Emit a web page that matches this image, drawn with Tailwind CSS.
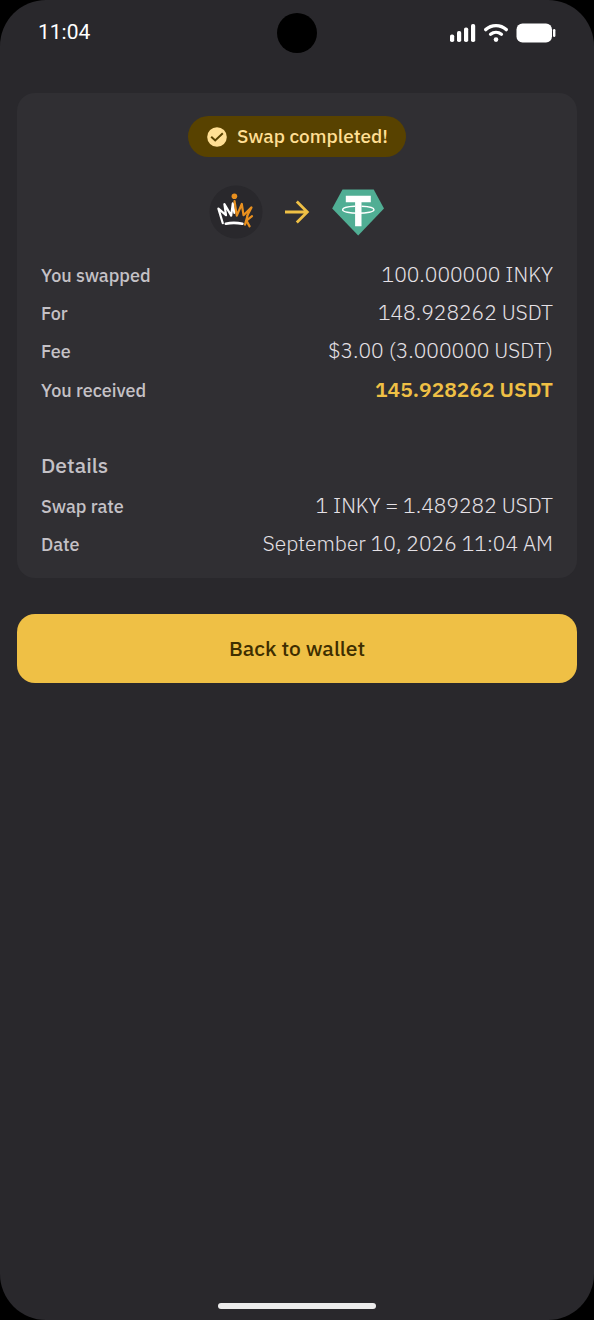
<!DOCTYPE html>
<html lang="en">
<head>
  <meta charset="UTF-8">
  <meta name="viewport" content="width=device-width, initial-scale=1.0">
  <title>Swap completed</title>
  <script src="https://cdn.jsdelivr.net/npm/@tailwindcss/browser@4"></script>
</head>
<body class="bg-black font-['IBM_Plex_Sans','Noto_Sans',sans-serif]">
  <div class="min-h-screen flex flex-col bg-[#29282c] rounded-[46px] overflow-hidden">

    <!-- Status bar -->
    <header class="grid grid-cols-3 items-center h-[66px] px-[38px] text-white">
      <span class="font-['Roboto',sans-serif] text-[21px]">11:04</span>
      <span class="size-10 rounded-full bg-black justify-self-center"></span>
      <div class="flex items-center justify-end gap-2">
        <svg class="w-[26px] h-5" viewBox="0 0 26 20" fill="currentColor" aria-hidden="true">
          <rect x="0" y="11.5" width="4.2" height="7.5" rx="1.8"/>
          <rect x="7" y="8" width="4.2" height="11" rx="1.8"/>
          <rect x="14" y="4.5" width="4.2" height="14.5" rx="1.8"/>
          <rect x="21" y="1" width="4.2" height="18" rx="1.8"/>
        </svg>
        <svg class="w-6 h-5" viewBox="0 0 24 20" fill="none" stroke="currentColor" stroke-width="3.4" stroke-linecap="round" aria-hidden="true">
          <path d="M1.8 6.6C7.5 1.3 16.5 1.3 22.2 6.6"/>
          <path d="M6.6 11.3c3.2-2.6 7.6-2.6 10.8 0"/>
          <circle cx="12" cy="16.6" r="2.3" fill="currentColor" stroke="none"/>
        </svg>
        <svg class="w-10 h-5" viewBox="0 0 40 20" fill="currentColor" aria-hidden="true">
          <rect x="0.5" y="0.5" width="35.5" height="19" rx="6"/>
          <rect x="37" y="6" width="2.4" height="8" rx="1.2"/>
        </svg>
      </div>
    </header>

    <main class="flex-1 px-[17px] pt-[27px]">
      <section class="rounded-[18px] bg-[#302f33] px-6 pt-[23px] pb-[15px]">
        <div class="flex justify-center">
          <div class="flex items-center gap-[9px] h-[41px] px-[18px] rounded-full bg-[#584200] text-[#ffdf94] text-[19px] font-medium">
            <svg class="size-[22px]" viewBox="0 0 22 22" aria-hidden="true">
              <circle cx="11" cy="11" r="9.8" fill="#ffdf94"/>
              <path d="M5.2 10.8l4 3.7 7.6-7.2" fill="none" stroke="#584200" stroke-width="2"/>
            </svg>
            Swap completed!
          </div>
        </div>

        <!-- Token pair -->
        <div class="flex items-center justify-center gap-5 mt-7 mb-[17px]">
          <svg class="size-[54px]" viewBox="0 0 54 54" fill="none" stroke-linecap="round" stroke-linejoin="round" role="img" aria-label="INKY">
            <circle cx="27" cy="27" r="26.5" fill="#29282c"/>
            <path d="M13.8 38.2L9.4 23.6l7.6 6.6-1.6-11.2 6.8 11.6 1.6-12.2 1.6 9.4" stroke="#fff" stroke-width="2.2"/>
            <path d="M16.8 38.8c5-1.200 11-1.200 16.600 0" stroke="#fff" stroke-width="2.6"/>
            <circle cx="25.4" cy="11.2" r="2.8" fill="#e8901f"/>
            <path d="M25.500 16l2.300 14.600L32.800 19l1.700 11.200 8-7.800-4.200 8.200" stroke="#e8901f" stroke-width="2.2"/>
            <path d="M38.4 31l-2.4 8.6M43 31.2l-5.6 4.4 3.2 5.8" stroke="#e8901f" stroke-width="2.2"/>
          </svg>
          <svg class="size-7" viewBox="0 0 28 28" fill="none" stroke="#efc045" stroke-width="2.8" aria-hidden="true">
            <path d="M2 14h22M13.800 3.500L24.300 14 13.800 24.500"/>
          </svg>
          <svg class="size-[54px]" viewBox="0 0 54 54" role="img" aria-label="USDT">
            <path d="M11.5 4.5h31.2L53 23.6 27.2 50.4 1.2 23.6z" fill="#50ae94"/>
            <path d="M14.8 10.8h25v6.4h-9.3v24h-6.4v-24h-9.3z" fill="#fff"/>
            <path d="M24 21.3c-7 .3-12.4 1.6-12.4 3.4 0 2 7 3.6 15.7 3.6S43 26.7 43 24.7c0-1.8-5.4-3.1-12.4-3.4" fill="none" stroke="#fff" stroke-width="1.4"/>
          </svg>
        </div>

        <dl class="text-[#c4c1c6]">
          <div class="flex items-center justify-between h-[38px]">
            <dt class="text-[18px] font-medium">You swapped</dt>
            <dd class="text-[21px] font-light text-[#e5e1e6]">100.000000 INKY</dd>
          </div>
          <div class="flex items-center justify-between h-[38px]">
            <dt class="text-[18px] font-medium">For</dt>
            <dd class="text-[21px] font-light text-[#e5e1e6]">148.928262 USDT</dd>
          </div>
          <div class="flex items-center justify-between h-[38px]">
            <dt class="text-[18px] font-medium">Fee</dt>
            <dd class="text-[21px] font-light text-[#e5e1e6]">$3.00 (3.000000 USDT)</dd>
          </div>
          <div class="flex items-center justify-between h-10">
            <dt class="text-[18px] font-medium">You received</dt>
            <dd class="text-[21px] font-semibold text-[#efc045]">145.928262 USDT</dd>
          </div>
        </dl>

        <h2 class="flex items-center h-10 mt-9 text-[21px] font-medium text-[#c4c1c6]">Details</h2>
        <dl class="mt-px text-[#c4c1c6]">
          <div class="flex items-center justify-between h-[38px]">
            <dt class="text-[18px] font-medium">Swap rate</dt>
            <dd class="text-[21px] font-light text-[#e5e1e6]">1 INKY = 1.489282 USDT</dd>
          </div>
          <div class="flex items-center justify-between h-[38px]">
            <dt class="text-[18px] font-medium">Date</dt>
            <dd class="text-[21px] font-light text-[#e5e1e6]">September 10, 2026 11:04 AM</dd>
          </div>
        </dl>
      </section>

      <button type="button" class="mt-9 w-full h-[69px] rounded-[18px] bg-[#efc045] text-[#3e2e00] text-[21px] font-medium">Back to wallet</button>
    </main>

    <!-- Home indicator -->
    <div class="flex justify-center pb-[11px]">
      <span class="w-[158px] h-1.5 rounded-full bg-[#ececec]"></span>
    </div>
  </div>
</body>
</html>
